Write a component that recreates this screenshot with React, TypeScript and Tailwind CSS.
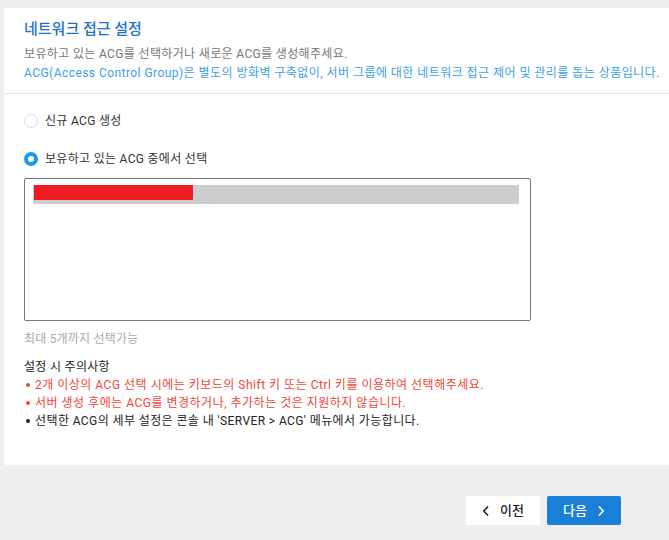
import React from "react";

export default function App() {
  const font = { fontFamily: 'Roboto, "Noto Sans CJK KR", sans-serif' };
  return (
    <div className="w-[669px] h-[540px] bg-[#efefef] overflow-hidden" style={font}>
      <div className="ml-[4px] mt-[8px] w-[680px] h-[457px] bg-white rounded-[3px] flex flex-col">
        <div className="px-[20px] pt-[10px] pb-[10px] border-b border-[#e3e3e3]">
          <div className="text-[15px] leading-[22px] font-medium text-[#1e73c9]">네트워크 접근 설정</div>
          <div className="mt-[5px] text-[12px] leading-[19px] tracking-[0.35px] text-[#777]">보유하고 있는 ACG를 선택하거나 새로운 ACG를 생성해주세요.</div>
          <div className="text-[12px] leading-[19px] tracking-[0.45px] text-[#3aa1e8] whitespace-nowrap">ACG(Access Control Group)은 별도의 방화벽 구축없이, 서버 그룹에 대한 네트워크 접근 제어 및 관리를 돕는 상품입니다.</div>
        </div>
        <div className="px-[20px] pt-[18px]">
          <div className="flex items-center gap-[7px] h-[18px]">
            <span className="w-[14px] h-[14px] rounded-full border border-[#dcdcdc] bg-white" />
            <span className="text-[12px] tracking-[0.3px] text-[#333]">신규 ACG 생성</span>
          </div>
          <div className="flex items-center gap-[7px] h-[18px] mt-[20px]">
            <span className="w-[14px] h-[14px] rounded-full border-[4px] border-[#1a9be8] bg-white" />
            <span className="text-[12px] tracking-[0.3px] text-[#333]">보유하고 있는 ACG 중에서 선택</span>
          </div>
          <div className="mt-[10px] w-[507px] h-[143px] border border-[#777] rounded-[2px] pt-[6px] px-[8px]">
            <div className="w-[486px] h-[19px] bg-[#cdcdcd]">
              <div className="ml-[1px] w-[159px] h-[15px] bg-[#ee1c25] rounded-r-[1px]" />
            </div>
          </div>
          <div className="mt-[9px] text-[12px] leading-[18px] tracking-[0.2px] text-[#aaa]">최대 5개까지 선택가능</div>
          <div className="mt-[10px] text-[12px] leading-[18px] tracking-[0.3px] text-[#222]">설정 시 주의사항</div>
          <div className="text-[12px] leading-[18px] tracking-[0.5px] text-[#f0463a] flex items-center gap-[5px] pl-[2px]">
            <span className="w-[4px] h-[4px] rounded-full bg-[#f0463a]" />
            <span>2개 이상의 ACG 선택 시에는 키보드의 Shift 키 또는 Ctrl 키를 이용하여 선택해주세요.</span>
          </div>
          <div className="text-[12px] leading-[18px] tracking-[0.5px] text-[#f0463a] flex items-center gap-[5px] pl-[2px]">
            <span className="w-[4px] h-[4px] rounded-full bg-[#f0463a]" />
            <span>서버 생성 후에는 ACG를 변경하거나, 추가하는 것은 지원하지 않습니다.</span>
          </div>
          <div className="text-[12px] leading-[18px] tracking-[0.4px] text-[#222] flex items-center gap-[5px] pl-[2px]">
            <span className="w-[4px] h-[4px] rounded-full bg-[#222]" />
            <span>선택한 ACG의 세부 설정은 콘솔 내 'SERVER &gt; ACG' 메뉴에서 가능합니다.</span>
          </div>
        </div>
      </div>
      <div className="flex justify-end gap-[7px] pr-[48px] mt-[31px]">
        <button className="w-[74px] h-[29px] bg-white rounded-[2px] flex items-center justify-center gap-[10px] text-[13px] font-medium text-[#222]">
          <svg width="8" height="12" viewBox="0 0 8 12"><path d="M6 1.5 L1.8 6 L6 10.5" stroke="#222" strokeWidth="1.6" fill="none" /></svg>
          <span>이전</span>
        </button>
        <button className="w-[74px] h-[29px] bg-[#1a7fd6] rounded-[2px] flex items-center justify-center gap-[10px] text-[13px] font-medium text-white">
          <span>다음</span>
          <svg width="8" height="12" viewBox="0 0 8 12"><path d="M2 1.5 L6.2 6 L2 10.5" stroke="#fff" strokeWidth="1.6" fill="none" /></svg>
        </button>
      </div>
    </div>
  );
}
